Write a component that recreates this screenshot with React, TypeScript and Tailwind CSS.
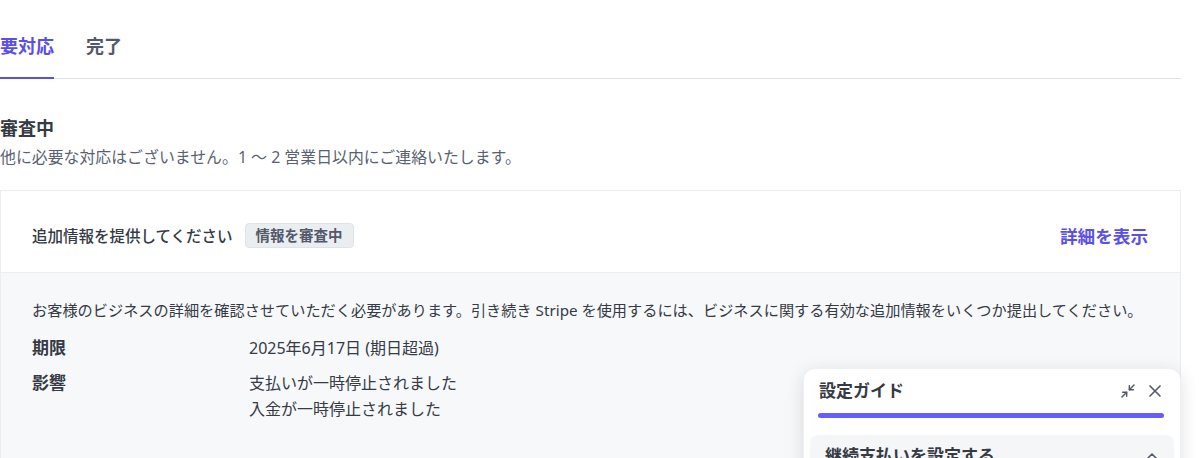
import { Minimize2, X, ChevronUp } from 'lucide-react';

const tabs = [
  { label: '要対応', active: true },
  { label: '完了', active: false },
];

const rows = [
  { label: '期限', values: ['2025年6月17日 (期日超過)'] },
  { label: '影響', values: ['支払いが一時停止されました', '入金が一時停止されました'] },
];

const SetupGuide = () => (
  <div className="absolute left-[803px] top-[368px] w-[378px] h-[120px] rounded-xl bg-white shadow-[0_4px_18px_rgba(0,0,0,0.12)] border border-[#eef0f3]">
    <div className="flex items-center justify-between pl-[15px] pr-[15px] pt-[11px]">
      <span className="text-[17px] leading-[22px] font-bold text-[#353a44]">設定ガイド</span>
      <div className="flex items-center gap-[9px] text-[#545969]">
        <Minimize2 className="w-[16px] h-[16px]" strokeWidth={2.2} />
        <X className="w-[20px] h-[20px]" strokeWidth={2} />
      </div>
    </div>
    <div className="mt-[11px] ml-[14px] mr-[16px] h-[5px] rounded-full bg-[#675dff]" />
    <div className="mt-[17px] mx-[6px] h-[60px] rounded-lg bg-[#f5f6f8] flex items-start justify-between pl-[15px] pr-[14px] pt-[9px]">
      <span className="text-[17px] leading-[24px] font-bold text-[#353a44]">継続支払いを設定する</span>
      <ChevronUp className="w-[16px] h-[16px] mt-[4px] text-[#545969]" strokeWidth={2.4} />
    </div>
  </div>
);

export default function App() {
  return (
    <div
      className="relative w-[1199px] h-[458px] overflow-hidden bg-white text-[#353a44]"
      style={{ fontFamily: '"Noto Sans", "Noto Sans CJK JP", sans-serif' }}
    >
      <div className="w-[1181px]">
        {/* Tabs */}
        <div className="flex gap-[32px] pt-[34px] border-b border-[#dfe3e8]">
          {tabs.map((tab) => (
            <button
              key={tab.label}
              className={`-mb-px pb-[19px] border-b-2 text-[18px] leading-[24px] font-semibold ${
                tab.active ? 'border-[#5b4fe9] text-[#5b4fe9]' : 'border-transparent text-[#545969]'
              }`}
            >
              {tab.label}
            </button>
          ))}
        </div>

        {/* Status */}
        <h2 className="mt-[36px] text-[18px] leading-[26px] font-semibold text-[#353a44]">審査中</h2>
        <p className="mt-[5px] text-[15.9px] leading-[22px] text-[#596171]">
          他に必要な対応はございません。1 〜 2 営業日以内にご連絡いたします。
        </p>

        {/* Card */}
        <div className="mt-[22px] border border-[#ebeef1] h-[300px]">
          <div className="flex items-center justify-between bg-white px-[31px] pt-[32px] pb-[24px] border-b border-[#ebeef1]">
            <div className="flex items-center gap-[12px]">
              <span className="text-[15.5px] leading-[24px] font-medium text-[#353a44]">追加情報を提供してください</span>
              <span className="px-[10px] h-[25px] flex items-center rounded-[4px] border border-[#dfe3e8] bg-[#ebeef1] text-[14.5px] font-bold text-[#545969]">
                情報を審査中
              </span>
            </div>
            <a className="text-[17.6px] leading-[24px] font-bold text-[#5b4fe9] mr-[1px]">詳細を表示</a>
          </div>
          <div className="bg-[#f6f8fa] h-full px-[31px] pt-[25px]">
            <p className="text-[15.2px] leading-[24px] text-[#353a44]">
              お客様のビジネスの詳細を確認させていただく必要があります。引き続き Stripe を使用するには、ビジネスに関する有効な追加情報をいくつか提出してください。
            </p>
            <div className="mt-[13px] flex flex-col gap-[9px]">
              {rows.map((row) => (
                <div key={row.label} className="grid grid-cols-[217px_1fr]">
                  <span className="text-[17px] leading-[26px] font-semibold text-[#353a44]">{row.label}</span>
                  <div className="flex flex-col">
                    {row.values.map((v) => (
                      <span key={v} className="text-[16px] leading-[26px] text-[#353a44]">{v}</span>
                    ))}
                  </div>
                </div>
              ))}
            </div>
          </div>
        </div>
      </div>

      <SetupGuide />
    </div>
  );
}
